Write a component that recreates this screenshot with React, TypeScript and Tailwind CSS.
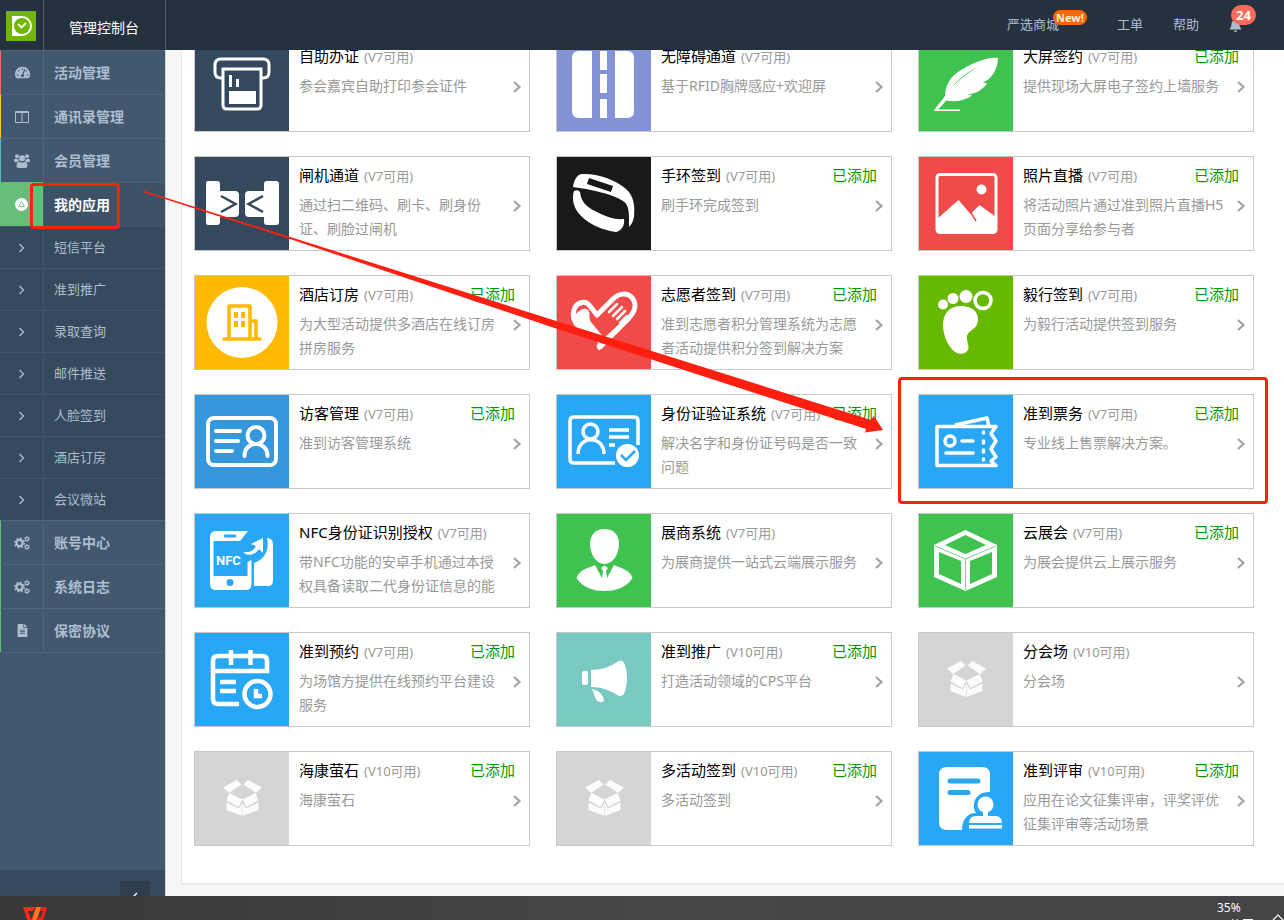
import React from 'react';
import { FaBell, FaFileAlt, FaTachometerAlt } from 'react-icons/fa';

interface AppItem {
  name: string;
  version: string;
  desc: string;
  added?: boolean;
  color: string;
  icon: React.ReactNode;
  highlight?: boolean;
}

/* Tile drawings, all on a 94 x 93 canvas */

const KioskIcon = () => (
  <g fill="none" stroke="#fff" strokeWidth="3">
    <path d="M28 40h-2q-6 0-6-6v-7q0-6 6-6h42q6 0 6 6v7q0 6-6 6h-2" />
    <path d="M28 31h38v36q0 4-4 4H32q-4 0-4-4z" />
    <path d="M34 37h3v12h-3zM41 41h3v8h-3zM34 53h27v13H34z" fill="#fff" stroke="none" />
  </g>
);

const RoadIcon = () => (
  <g fill="#fff">
    <path d="M35 13H22q-7 0-7 7v53q0 7 7 7h13zM58 13h12q7 0 7 7v53q0 7-7 7H58z" />
    <path d="M43 13h7v19h-7zM43 36h7v19h-7zM43 61h7v19h-7z" />
  </g>
);

const FeatherIcon = () => (
  <path
    d="M79 20C70 18 52 25 39 34c-9 6-13 15-13 25C33 47 44 36 60 28 44 38 31 49 24 61c-5 6-8 9-9 12h26v-1.500H19c2-2 5-5 8-9 9 2 19 0 26-5l-4-1c8-1 15-5 19-11l-4-1c8-3 15-13 15-25z"
    fill="#fff"
  />
);

const GateIcon = () => (
  <g>
    <path
      fill="#fff"
      d="M13 24h9q3 0 3 3v7h15q4 0 4 4v18q0 4-4 4H25v5q0 3-3 3h-9q-2 0-2-3V27q0-3 2-3zM81 24h-9q-3 0-3 3v7H54q-4 0-4 4v18q0 4 4 4h15v5q0 3 3 3h9q3 0 3-3V27q0-3-3-3z"
    />
    <path d="M26 39l14.500 8L26 55M68 39l-14.500 8L68 55" fill="none" stroke="#34495e" strokeWidth="2.500" />
  </g>
);

const BandIcon = () => (
  <g fill="#fff">
    <path
      fillRule="evenodd"
      d="M16 30c1-6 3-12 9-13 13-1 33 5 44 15 8 7 9 17 8 28-1 4-2 7-5 10 0-11 1-22-6-26-10-7-34-12-50-14zM32 21l24 8-2 6-24-8z"
    />
    <path d="M17 34q4-2 6 1c1 9 6 15 15 19 10 5 18 9 29 8 1 7-3 12-8 13-17-2-43-14-43-34q0-5 1-7z" />
  </g>
);

const PhotoIcon = () => (
  <g>
    <rect x="18" y="17.500" width="59" height="58" rx="3" fill="none" stroke="#fff" strokeWidth="3" />
    <circle cx="62.500" cy="32.500" r="5" fill="#fff" />
    <path d="M18 62l21.500-19 12 14 9-9L77 60v15H18z" fill="#fff" />
    <path d="M51 54l6 10" stroke="#f04b48" strokeWidth="1.500" />
  </g>
);

const HotelIcon = () => (
  <g>
    <circle cx="47" cy="46.500" r="35.500" fill="#fff" />
    <g fill="none" stroke="#ffb900" strokeWidth="3.500" strokeLinecap="round" strokeLinejoin="round">
      <path d="M29 63h36M34 62V30h21v32M56 45h5v17" />
    </g>
    <path fill="#ffb900" d="M39 36h4v6h-4zM46 36h4v6h-4zM39 45h4v6h-4zM46 45h4v6h-4z" />
  </g>
);

const HeartHandIcon = () => (
  <g>
    <path
      d="M44 73l-2-3 27-25c7-7 12-14 7-22-5-7-14-6-20 0L40 39l-7-9c-5-7-14-3-16 4-2 6 0 12 5 17l9 9"
      fill="none"
      stroke="#fff"
      strokeWidth="5"
      strokeLinejoin="round"
    />
    <path d="M18 39c4-5 10-8 13-5 3 3 0 8 3 12l14 17-6 5-22-21z" fill="#fff" />
    <path d="M52 36l8-8M56 40l9-9M60 43l8-8M63 47l7-7" stroke="#fff" strokeWidth="2.500" strokeLinecap="round" />
    <path d="M40 61l5 8 5-5 22-22" fill="none" stroke="#fff" strokeWidth="5" />
    <path d="M37 68l10-7" stroke="#f04b48" strokeWidth="1.500" />
  </g>
);

const FootIcon = () => (
  <g fill="#fff">
    <circle cx="24" cy="28.500" r="5" />
    <circle cx="34" cy="22.500" r="5.500" />
    <circle cx="47" cy="20.500" r="6.500" />
    <circle cx="64" cy="24.500" r="8" fill="none" stroke="#fff" strokeWidth="3.500" />
    <path d="M42 30c10 0 17 5 17 13 0 11-9 10-11 17-1 5 3 10 1 14-2 4-8 5-13 2-7-5-12-17-12-27 0-12 7-19 18-19z" />
  </g>
);

const VisitorIcon = () => (
  <g fill="none" stroke="#fff" strokeWidth="4" strokeLinecap="round">
    <rect x="13" y="23" width="68" height="47" rx="6" />
    <path d="M21 36h24M21 46h22M21 56h16" />
    <circle cx="61" cy="40.500" r="8.500" />
    <path d="M49.500 61c0-16 23-16 23 0" />
  </g>
);

const IdCheckIcon = () => (
  <g fill="none" stroke="#fff" strokeWidth="3.500">
    <path d="M58 68H17q-4 0-4-4V26q0-4 4-4h60q4 0 4 4v24" />
    <circle cx="33.500" cy="36.500" r="7.500" />
    <path d="M21 59c0-19 26-19 26 0M52 35h20M52 42h20M52 50h6" />
    <circle cx="70.500" cy="60.500" r="11.500" fill="#fff" stroke="none" />
    <path d="M64 60l5 5 9-9" stroke="#28a7f5" strokeWidth="2.500" />
  </g>
);

const TicketIcon = () => (
  <g fill="none" stroke="#fff" strokeWidth="3.500" strokeLinejoin="round">
    <path d="M18 31.500h59l-5 7 5 7.500-5 8 5 8-5 4 5 4.500H18zM36 30l32-7 2 8" />
    <circle cx="31" cy="46" r="5" />
    <path d="M43 46h11M27 58h27" strokeLinecap="round" />
    <path d="M64.500 37v1M64.500 46v2M64.500 55v2M64.500 64v1" strokeLinecap="round" />
  </g>
);

const NfcIcon = () => (
  <g>
    <path
      fill="#fff"
      fillRule="evenodd"
      d="M21 17h32l-8 10H18.500v35h34V48l4-2v24q0 6-6 6H21q-6 0-6-6V23q0-6 6-6zM30 20.500q-3 1.500 0 3h10q3-1.500 0-3zM38.500 68.500a3.500 3.500 0 1 0-7 0 3.500 3.500 0 1 0 7 0z"
    />
    <path fill="#fff" d="M72 24q6 0 6 7v35q0 6-5 6H59V49c10-3 16-13 13-25z" />
    <path fill="#fff" d="M48 38c7 1 11-2 13-6l-5-2 12-6v15l-4-4c-4 6-11 8-16 3z" />
    <text x="21" y="51" fill="#fff" fontSize="13" fontWeight="bold" fontFamily="Roboto, sans-serif">
      NFC
    </text>
  </g>
);

const PersonIcon = () => (
  <g fill="#fff">
    <path d="M47.500 15c9 0 14.500 6 14.500 15 0 10-6 20-14.500 20S33 40 33 30c0-9 5.500-15 14.500-15z" />
    <path d="M38 51l7 13 1-7-2-3 3.500-2.500L51 54l-2 3 1 7 7-13c9 4 16 5 18.500 13C69 74 58 77 47.500 77S26 74 19.500 64C22 56 29 55 38 51z" />
  </g>
);

const CubeIcon = () => (
  <g>
    <path
      fill="#fff"
      fillRule="evenodd"
      d="M46.500 16L78 31v32L46.500 77 15 63V31zM46.500 21L26 31l20.500 9L67 31zM20 38v22l22 10V47zM73 38v22L51 70V47z"
    />
    <path d="M16 32l30.500 13L77 32M46.500 45v31" fill="none" stroke="#3fc24f" strokeWidth="0.700" />
  </g>
);

const CalendarIcon = () => (
  <g fill="none" stroke="#fff" strokeWidth="4.500">
    <path d="M44 71H23q-5 0-5-5V28q0-5 5-5h44q5 0 5 5v10H18M36 17v15M55.500 17v15M25 49h16M25 58h16" />
    <circle cx="62.500" cy="61" r="13" />
    <path d="M61 56v7h6" />
  </g>
);

const MegaphoneIcon = () => (
  <g fill="#fff">
    <rect x="25" y="38" width="6" height="14" rx="2" />
    <path d="M34 37c12 0 20-4 28-9 5-3 8 7 8 17s-3 20-8 18c-8-5-16-9-28-9zM35 56c7 2 11 5 12 12-4 3-8 0-9-4z" />
  </g>
);

const BoxIcon = () => (
  <g fill="#fff" opacity="0.95">
    <path d="M28 35.500L42 28l4.500 4.500L34 41zM67 35.500L53 28l-4.500 4.500L61 41z" />
    <path d="M34.500 41l13 6.500-4 7.500-12-6.500zM60.500 41l-13 6.500 4 7.500 12-6.500z" />
    <path d="M31.500 50.500l12.500 6 3.500-6 3.500 6 12.500-6V58l-16 6-16-6z" />
    <path d="M47.500 52v12" stroke="#d5d5d5" strokeWidth="0.500" />
  </g>
);

const ReviewIcon = () => (
  <g>
    <path fill="#fff" d="M28 15h35q8 0 8 8v17c-13-1-20 11-14 21-8 0-14 6-14 17H28q-8 0-8-8V23q0-8 8-8z" />
    <path d="M31 29h28M31 40.500h18" stroke="#28a7f5" strokeWidth="5" strokeLinecap="round" />
    <circle cx="66.500" cy="52.500" r="8" fill="#fff" />
    <path fill="#fff" d="M64 58h5v6h8q6 1 6 7H50q0-6 6-7h8zM50 73h33v3.500H50z" />
  </g>
);

const apps: AppItem[] = [
  { name: '自助办证', version: 'V7可用', desc: '参会嘉宾自助打印参会证件', color: 'bg-[#34495e]', icon: <KioskIcon /> },
  { name: '无障碍通道', version: 'V7可用', desc: '基于RFID胸牌感应+欢迎屏', color: 'bg-[#8492d8]', icon: <RoadIcon /> },
  { name: '大屏签约', version: 'V7可用', desc: '提供现场大屏电子签约上墙服务', added: true, color: 'bg-[#3fc24f]', icon: <FeatherIcon /> },
  { name: '闸机通道', version: 'V7可用', desc: '通过扫二维码、刷卡、刷身份证、刷脸过闸机', color: 'bg-[#34495e]', icon: <GateIcon /> },
  { name: '手环签到', version: 'V7可用', desc: '刷手环完成签到', added: true, color: 'bg-[#191919]', icon: <BandIcon /> },
  { name: '照片直播', version: 'V7可用', desc: '将活动照片通过准到照片直播H5页面分享给参与者', added: true, color: 'bg-[#f04b48]', icon: <PhotoIcon /> },
  { name: '酒店订房', version: 'V7可用', desc: '为大型活动提供多酒店在线订房拼房服务', added: true, color: 'bg-[#ffb900]', icon: <HotelIcon /> },
  { name: '志愿者签到', version: 'V7可用', desc: '准到志愿者积分管理系统为志愿者活动提供积分签到解决方案', added: true, color: 'bg-[#f04b48]', icon: <HeartHandIcon /> },
  { name: '毅行签到', version: 'V7可用', desc: '为毅行活动提供签到服务', added: true, color: 'bg-[#66b900]', icon: <FootIcon /> },
  { name: '访客管理', version: 'V7可用', desc: '准到访客管理系统', added: true, color: 'bg-[#3598dc]', icon: <VisitorIcon /> },
  { name: '身份证验证系统', version: 'V7可用', desc: '解决名字和身份证号码是否一致问题', added: true, color: 'bg-[#28a7f5]', icon: <IdCheckIcon /> },
  { name: '准到票务', version: 'V7可用', desc: '专业线上售票解决方案。', added: true, color: 'bg-[#28a7f5]', icon: <TicketIcon />, highlight: true },
  { name: 'NFC身份证识别授权', version: 'V7可用', desc: '带NFC功能的安卓手机通过本授权具备读取二代身份证信息的能', color: 'bg-[#28a7f5]', icon: <NfcIcon /> },
  { name: '展商系统', version: 'V7可用', desc: '为展商提供一站式云端展示服务', color: 'bg-[#3fc24f]', icon: <PersonIcon /> },
  { name: '云展会', version: 'V7可用', desc: '为展会提供云上展示服务', added: true, color: 'bg-[#3fc24f]', icon: <CubeIcon /> },
  { name: '准到预约', version: 'V7可用', desc: '为场馆方提供在线预约平台建设服务', added: true, color: 'bg-[#28a7f5]', icon: <CalendarIcon /> },
  { name: '准到推广', version: 'V10可用', desc: '打造活动领域的CPS平台', added: true, color: 'bg-[#79c9c3]', icon: <MegaphoneIcon /> },
  { name: '分会场', version: 'V10可用', desc: '分会场', color: 'bg-[#d5d5d5]', icon: <BoxIcon /> },
  { name: '海康萤石', version: 'V10可用', desc: '海康萤石', added: true, color: 'bg-[#d5d5d5]', icon: <BoxIcon /> },
  { name: '多活动签到', version: 'V10可用', desc: '多活动签到', added: true, color: 'bg-[#d5d5d5]', icon: <BoxIcon /> },
  { name: '准到评审', version: 'V10可用', desc: '应用在论文征集评审，评奖评优征集评审等活动场景', added: true, color: 'bg-[#28a7f5]', icon: <ReviewIcon /> },
];

const ColumnsIcon = () => (
  <svg viewBox="0 0 14 12" className="h-3 w-3.5" fill="none" stroke="currentColor">
    <path d="M.5.5h13v11H.5zM7 1v10M1 1.500h12" />
  </svg>
);

const GroupIcon = () => (
  <svg viewBox="0 0 16 14" className="h-3.5 w-4" fill="currentColor">
    <circle cx="3" cy="2.200" r="2" />
    <circle cx="13" cy="2.200" r="2" />
    <circle cx="8" cy="4.200" r="3" />
    <path d="M0 7q0-2.500 1.500-2.500Q3 5.500 4.300 5q.2 1.500 1 2.300Q4 7.300 3.300 8.300H1.500Q0 8.300 0 7zM16 7q0-2.500-1.500-2.500-1.500 1-2.800.5-.2 1.500-1 2.300 1.300 0 2 1h1.800Q16 8.300 16 7zM2.500 12q0-4 2.700-4.300Q8 9.500 10.800 7.700q2.700.3 2.700 4.300 0 2-2 2h-7q-2 0-2-2z" />
  </svg>
);

const CogsIcon = () => (
  <svg viewBox="0 0 16 14" className="h-3.5 w-4" fill="none" stroke="currentColor">
    <circle cx="5.500" cy="7" r="3.100" strokeWidth="2.200" />
    <circle cx="5.500" cy="7" r="4.700" strokeWidth="1.600" strokeDasharray="1.850 1.840" />
    <circle cx="13" cy="3" r="1.600" strokeWidth="1.200" />
    <circle cx="13" cy="3" r="2.500" strokeWidth="0.900" strokeDasharray="1.300 1.320" />
    <circle cx="13" cy="11" r="1.600" strokeWidth="1.200" />
    <circle cx="13" cy="11" r="2.500" strokeWidth="0.900" strokeDasharray="1.300 1.320" />
  </svg>
);

const AngleIcon = () => (
  <svg viewBox="0 0 8 10" className="h-2.5 w-2" fill="none" stroke="currentColor" strokeWidth="1.400">
    <path d="M1.500 1l4 4-4 4" />
  </svg>
);

const ActiveIcon = () => (
  <svg viewBox="0 0 13 13" className="size-[13px]">
    <circle cx="6.500" cy="6.500" r="6.500" fill="#fff" />
    <path d="M6.500 3.500l3 5h-6z" fill="none" stroke="#65bd77" strokeWidth="0.800" />
  </svg>
);

const topMenu = [
  { label: '活动管理', bar: 'border-l-[#fb6b5b]', icon: <FaTachometerAlt size={15} /> },
  { label: '通讯录管理', bar: 'border-l-[#ffc333]', icon: <ColumnsIcon /> },
  { label: '会员管理', bar: 'border-l-[#4cc0c1]', icon: <GroupIcon /> },
];

const subMenu = ['短信平台', '准到推广', '录取查询', '邮件推送', '人脸签到', '酒店订房', '会议微站'];

const bottomMenu = [
  { label: '账号中心', bar: 'border-l-[#65bd77]', icon: <CogsIcon /> },
  { label: '系统日志', bar: 'border-l-[#65bd77]', icon: <CogsIcon /> },
  { label: '保密协议', bar: 'border-l-[#65bd77]', icon: <FaFileAlt size={13} /> },
];

interface MenuLinkProps {
  label: string;
  bar: string;
  icon: React.ReactNode;
}

const MenuLink: React.FC<MenuLinkProps> = ({ label, bar, icon }) => (
  <a href="#" className="flex h-11 text-sm font-bold text-[#adbece]">
    <span className={`flex w-[43px] shrink-0 items-center justify-center border-t border-l border-t-[#4f657b] ${bar}`}>
      {icon}
    </span>
    <span className="flex flex-1 items-center border-t border-l border-[#4f657b] pt-px pl-2.5">{label}</span>
  </a>
);

const AppCard: React.FC<{ app: AppItem }> = ({ app }) => (
  <a href="#" className="relative flex h-[95px] border border-[#c8c8c8] bg-white">
    <div className={`w-[94px] shrink-0 ${app.color}`}>
      <svg viewBox="0 0 94 93" className="h-full w-full">
        {app.icon}
      </svg>
    </div>
    <div className="min-w-0 flex-1 pt-1.5 pl-2.5">
      <div className="flex h-6 items-baseline pr-3.5 leading-6 whitespace-nowrap">
        <span className="text-[15px] text-black">{app.name}</span>
        <span className="ml-[5px] text-[13px] text-[#999]">({app.version})</span>
        {app.added && <span className="ml-auto text-[15px] text-[#090]">已添加</span>}
      </div>
      <div className="mt-1.5 flex items-start pr-[5px]">
        <p className="mr-2 max-h-12 min-w-0 flex-1 overflow-hidden text-sm leading-6 text-[#999]">{app.desc}</p>
        <svg viewBox="0 0 14 24" className="h-6 w-3.5 shrink-0" fill="none" stroke="#a3a3a3" strokeWidth="2.200">
          <path d="M4 8l5.500 5L4 18" />
        </svg>
      </div>
    </div>
    {app.highlight && (
      <div className="pointer-events-none absolute -top-[18px] -right-[15px] -bottom-4 -left-[21px] rounded-sm border-3 border-[#ff1f10]" />
    )}
  </a>
);

export default function App() {
  return (
    <div className="relative flex h-screen flex-col overflow-hidden bg-[#f7f7f7] font-['Noto_Sans','Noto_Sans_CJK_SC',sans-serif]">
      <header className="flex h-[50px] shrink-0 items-stretch bg-[#25313e] text-[13px] text-[#adbece]">
        <div className="flex w-11 shrink-0 items-center border-r border-[#4a5f75] pt-0.5 pl-1.5">
          <svg viewBox="0 0 30 30" className="size-[30px]">
            <rect width="30" height="30" fill="#6fb700" />
            <path d="M6 5h10a10 10 0 0 1 0 20H6z" fill="#fff" />
            <circle cx="16" cy="15" r="8" fill="#6fb700" />
            <path d="M12 13l3.500 3.500L20 12" fill="none" stroke="#fff" strokeWidth="1.800" />
          </svg>
        </div>
        <div className="flex w-[122px] shrink-0 items-center border-r border-[#4a5f75] pt-1.5 pl-[25px] text-sm text-white">
          管理控制台
        </div>
        <nav className="ml-auto flex items-center pr-[42px]">
          <a href="#" className="relative">
            严选商城
            <span className="absolute -top-[5px] left-[46px] rounded-full bg-[#ff6600] px-[3px] text-[11px] leading-[15px] font-bold text-[#fff3d0]">
              New!
            </span>
          </a>
          <a href="#" className="ml-[58px]">工单</a>
          <a href="#" className="ml-[30px]">帮助</a>
          <a href="#" className="relative ml-[30px]" aria-label="通知">
            <FaBell size={13} />
            <span className="absolute -top-3.5 left-0.5 rounded-full bg-[#fb6b5b] px-[5px] text-[13px] leading-5 font-bold text-white">
              24
            </span>
          </a>
        </nav>
      </header>

      <div className="flex min-h-0 flex-1">
        <aside className="flex w-[166px] shrink-0 flex-col border-r border-[#d0d4d8] bg-[#42586e]">
          <nav className="border-b border-[#4f657b]">
            {topMenu.map((item) => (
              <MenuLink key={item.label} {...item} />
            ))}
            <a href="#" className="relative flex h-11 bg-[#3d5266] text-sm font-bold text-white">
              <span className="flex w-[43px] shrink-0 items-center justify-center bg-[#65bd77]">
                <ActiveIcon />
              </span>
              <span className="flex flex-1 items-center border-t border-l border-[#4a5f73] pt-px pl-2.5">我的应用</span>
              <span className="pointer-events-none absolute top-px left-[30px] z-10 h-[46px] w-[90px] rounded-sm border-3 border-[#ff1f10]" />
            </a>
            {subMenu.map((label) => (
              <a key={label} href="#" className="flex h-[42px] border-t border-[#435669] bg-[#364a5d] text-[13px] text-[#adbece]">
                <span className="flex w-[43px] shrink-0 items-center justify-center">
                  <AngleIcon />
                </span>
                <span className="flex flex-1 items-center border-l border-[#435669] pl-2.5">{label}</span>
              </a>
            ))}
            {bottomMenu.map((item) => (
              <MenuLink key={item.label} {...item} />
            ))}
          </nav>
          <div className="mt-auto flex h-[26px] items-start justify-end overflow-hidden bg-[#364a5d] pt-[11px] pr-[15px]">
            <button aria-label="收起" className="flex h-[30px] w-[30px] shrink-0 items-center justify-center rounded-xs bg-[#2e3e4e] text-white">
              <svg viewBox="0 0 8 10" className="h-2.5 w-2" fill="none" stroke="currentColor" strokeWidth="1.400">
                <path d="M6 2L2 6l4 4" />
              </svg>
            </button>
          </div>
        </aside>

        {/* The list is scrolled to its end */}
        <main className="flex min-w-0 flex-1 flex-col justify-end overflow-hidden pl-[15px]">
          <section className="mb-[11px] border-b-2 border-l border-[#e7e7e7] bg-white pt-6 pr-[30px] pb-[37px] pl-3">
            <div className="grid grid-cols-3 gap-x-[26px] gap-y-6">
              {apps.map((app) => (
                <AppCard key={app.name} app={app} />
              ))}
            </div>
          </section>
        </main>
      </div>

      <footer className="flex h-6 shrink-0 items-start justify-between overflow-hidden bg-linear-to-r from-[#363839] via-[#464646] to-[#444] text-xs text-white">
        <svg viewBox="0 0 24 18" className="mt-[11px] ml-[23px] h-[18px] w-6 shrink-0">
          <path d="M0 0h12l-2 4H5l3 9 5-13h5l-6 18H6z" fill="#ff2a1c" />
          <path d="M13 0h5l-6 18H8z" fill="#ff7a1c" />
          <path d="M18 0h6l-5 18h-5l-1-6 3-3 1 3 3-8h-3z" fill="#f5201c" />
        </svg>
        <div className="flex items-start">
          <div className="flex w-9 flex-col items-end pt-1">
            <span className="self-start leading-4">35%</span>
            <svg viewBox="0 0 22 3" className="mt-[3px] h-[3px] w-[22px]" stroke="#fff">
              <path d="M2 0L1 3M6 0l1 3M12 .5h10" />
            </svg>
          </div>
          <svg viewBox="0 0 12 8" className="mt-[17px] ml-[19px] h-2 w-3" fill="none" stroke="#fff" strokeWidth="1.200">
            <path d="M1 7l5-5 5 5" />
          </svg>
        </div>
      </footer>

      {/* Guide arrow from the menu entry to the ticket card */}
      <svg viewBox="0 0 1284 920" className="pointer-events-none absolute top-0 left-0 z-20 h-[920px] w-[1284px]">
        <path d="M143 190.500L550 319l321 101 3-4 9 14-18 2.500 1-3.500L550 326.500 290 239 143 192z" fill="#ff1f10" />
      </svg>
    </div>
  );
}
